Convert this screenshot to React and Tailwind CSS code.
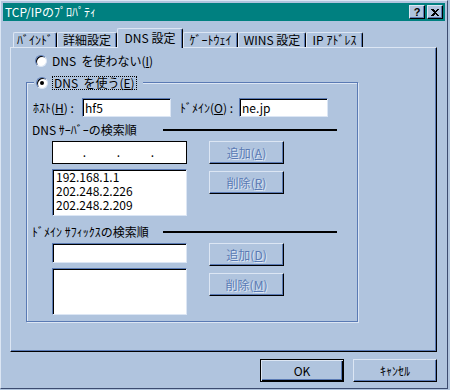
import React from "react";

const raised =
  "border border-t-[#dce6f4] border-l-[#dce6f4] border-r-black border-b-black shadow-[inset_-1px_-1px_0_#5a7ab4]";
const sunken =
  "border border-t-[#5a7ab4] border-l-[#5a7ab4] border-r-[#dce6f4] border-b-[#dce6f4] shadow-[inset_1px_1px_0_#000] bg-white";
const dim = "text-[#5a7ab4] [text-shadow:1px_1px_0_#dce6f4]";

const Radio = ({ checked }) => (
  <div className="w-[12px] h-[12px] shrink-0 rounded-full bg-white border border-t-[#5a7ab4] border-l-[#5a7ab4] border-r-[#dce6f4] border-b-[#dce6f4] shadow-[inset_1px_1px_0_#000] flex items-center justify-center">
    {checked && <div className="w-[4px] h-[4px] rounded-full bg-black" />}
  </div>
);

const DimButton = ({ label, hot }) => (
  <button
    type="button"
    className={`w-[75px] h-[23px] bg-[#b0c4de] flex items-center justify-center ${raised} ${dim}`}
  >
    {label}(<span className="underline">{hot}</span>)
  </button>
);

const tabs = [
  { label: "ﾊﾞｲﾝﾄﾞ", w: "w-[44px]" },
  { label: "詳細設定", w: "w-[60px]" },
  { label: "DNS 設定", w: "w-[66px]", active: true },
  { label: "ｹﾞｰﾄｳｪｲ", w: "w-[55px]" },
  { label: "WINS 設定", w: "w-[68px]" },
  { label: "IP ｱﾄﾞﾚｽ", w: "w-[57px]" },
];

const TitleBar = () => (
  <div className="h-[18px] bg-[#008080] flex items-center pl-[2px] pr-[2px]">
    <span className="text-white leading-[14px]">TCP/IPのﾌﾟﾛﾊﾟﾃｨ</span>
    <div className="ml-auto flex gap-[2px]">
      <div className={`w-[16px] h-[14px] bg-[#b0c4de] flex items-center justify-center ${raised}`}>
        <span className="font-bold text-[11px] leading-[11px] font-['Liberation_Sans',sans-serif]">?</span>
      </div>
      <div className={`w-[16px] h-[14px] bg-[#b0c4de] flex items-center justify-center ${raised}`}>
        <svg width="8" height="7" viewBox="0 0 8 7" shapeRendering="crispEdges">
          <path d="M0 0h2l2 2 2-2h2L5 3.5 8 7H6L4 5 2 7H0l3-3.5z" fill="black" />
        </svg>
      </div>
    </div>
  </div>
);

const SectionLabel = ({ text }) => (
  <div className="h-[14px] flex items-center">
    <span className="ml-[5px] w-[131px] leading-[14px]">{text}</span>
    <div className="w-[174px] h-[2px] bg-black" />
  </div>
);

export default function App() {
  return (
    <div className="w-[450px] h-[390px] bg-[#b0c4de] text-black text-[12px] whitespace-nowrap font-['Noto_Sans_CJK_JP',sans-serif]">
      <div className="w-[448px] h-[389px] border border-t-[#dce6f4] border-l-[#dce6f4] border-r-[#3c4c70] border-b-[#3c4c70] p-[2px] flex flex-col">
        <TitleBar />

        <div className="ml-[7px] mt-[7px]">
          <div className="h-[19px] ml-[3px] flex items-end">
            {tabs.map((t) =>
              t.active ? (
                <div
                  key={t.label}
                  className={`${t.w} h-[20px] -mb-[1px] relative z-10 bg-[#b0c4de] border-t border-l border-r border-t-[#dce6f4] border-l-[#dce6f4] border-r-black rounded-t-[2px] shadow-[inset_-1px_0_0_#5a7ab4] flex items-center justify-center pb-[2px]`}
                >
                  {t.label}
                </div>
              ) : (
                <div
                  key={t.label}
                  className={`${t.w} h-[15px] border-t border-l border-r border-t-[#dce6f4] border-l-[#dce6f4] border-r-black rounded-t-[2px] shadow-[inset_-1px_0_0_#5a7ab4] flex items-center justify-center leading-[14px]`}
                >
                  {t.label}
                </div>
              )
            )}
          </div>

          <div className={`w-[427px] h-[305px] ${raised}`}>
            <div className="mt-[7px] ml-[24px] h-[12px] flex items-center gap-[5px]">
              <Radio />
              <span className="leading-[14px] whitespace-pre">
                DNS  を使わない(<span className="underline">I</span>)
              </span>
            </div>

            <div className="relative mt-[15px] ml-[15px] w-[332px] h-[240px] border border-[#5a7ab4] shadow-[inset_1px_1px_0_#dce6f4,1px_1px_0_#dce6f4]">
              <div className="absolute left-[7px] -top-[7px] h-[14px] bg-[#b0c4de] flex items-center pl-[2px] pr-[6px]">
                <Radio checked />
                <span className="ml-[4px] h-[14px] border border-dotted border-black leading-[12px] px-[1px] whitespace-pre">
                  DNS  を使う(<span className="underline">E</span>)
                </span>
              </div>

              <div className="mt-[15px] h-[19px] flex items-center">
                <span className="ml-[6px] w-[49px]">
                  ﾎｽﾄ(<span className="underline">H</span>) :
                </span>
                <div className={`w-[89px] h-[19px] pl-[2px] leading-[17px] ${sunken}`}>hf5</div>
                <span className="ml-[9px] w-[59px]">
                  ﾄﾞﾒｲﾝ(<span className="underline">O</span>) :
                </span>
                <div className={`w-[89px] h-[19px] pl-[2px] leading-[17px] ${sunken}`}>ne.jp</div>
              </div>

              <div className="mt-[6px]">
                <SectionLabel text="DNS ｻｰﾊﾞｰの検索順" />
              </div>

              <div className="mt-[4px] ml-[25px] flex">
                <div className="w-[135px] flex flex-col gap-[5px]">
                  <div className="h-[23px] bg-white border border-black flex items-end pb-[2px]">
                    <span className="w-[33px] text-right">.</span>
                    <span className="w-[34px] text-right">.</span>
                    <span className="w-[34px] text-right">.</span>
                  </div>
                  <div className={`h-[47px] pl-[3px] leading-[14px] ${sunken}`}>
                    <div>192.168.1.1</div>
                    <div>202.248.2.226</div>
                    <div>202.248.2.209</div>
                  </div>
                </div>
                <div className="ml-[22px] flex flex-col gap-[7px]">
                  <DimButton label="追加" hot="A" />
                  <DimButton label="削除" hot="R" />
                </div>
              </div>

              <div className="mt-[9px]">
                <SectionLabel text="ﾄﾞﾒｲﾝ ｻﾌｨｯｸｽの検索順" />
              </div>

              <div className="mt-[4px] ml-[25px] flex">
                <div className="w-[135px] flex flex-col gap-[5px]">
                  <div className={`h-[20px] ${sunken}`} />
                  <div className={`h-[47px] ${sunken}`} />
                </div>
                <div className="ml-[22px] flex flex-col gap-[7px]">
                  <DimButton label="追加" hot="D" />
                  <DimButton label="削除" hot="M" />
                </div>
              </div>
            </div>
          </div>
        </div>

        <div className="mt-[7px] mr-[8px] flex justify-end gap-[9px]">
          <button
            type="button"
            className="w-[84px] h-[23px] bg-[#b0c4de] border border-black shadow-[inset_1px_1px_0_#dce6f4,inset_-1px_-1px_0_#000,inset_-2px_-2px_0_#5a7ab4] flex items-center justify-center"
          >
            OK
          </button>
          <button
            type="button"
            className={`w-[84px] h-[23px] bg-[#b0c4de] flex items-center justify-center ${raised}`}
          >
            ｷｬﾝｾﾙ
          </button>
        </div>
      </div>
    </div>
  );
}
